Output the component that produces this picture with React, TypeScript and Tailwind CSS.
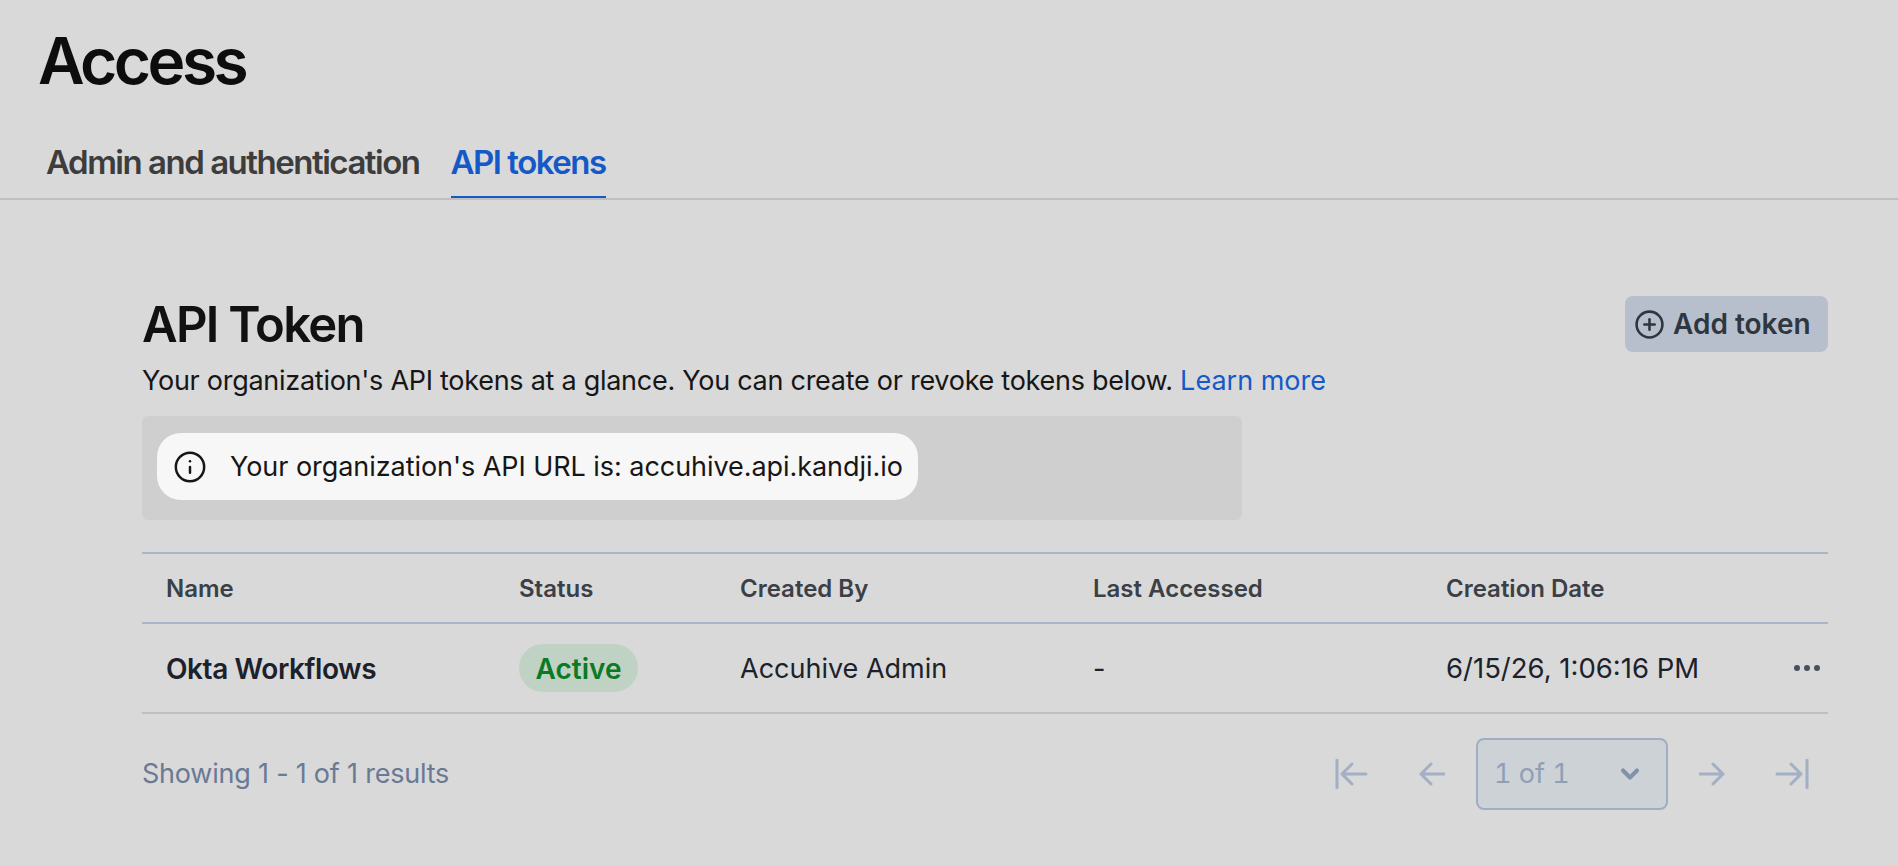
import React from 'react';
import { ChevronDown, CirclePlus, Info } from 'lucide-react';

const font = { fontFamily: 'Inter, "Liberation Sans", sans-serif' };

function PageArrow({ kind }: { kind: 'first' | 'prev' | 'next' | 'last' }) {
  const wide = kind === 'first' || kind === 'last';
  const paths: Record<string, string> = {
    first: 'M3 1v28M32 15H9M18 5L8 15l10 10',
    prev: 'M26 15H3M13 5L3 15l10 10',
    next: 'M1 15h23M14 5l10 10-10 10',
    last: 'M32 1v28M2 15h23M16 5l10 10-10 10',
  };
  return (
    <svg
      width={wide ? 34 : 27}
      height={30}
      viewBox={wide ? '0 0 34 30' : '0 0 27 30'}
      fill="none"
      stroke="#a3afc4"
      strokeWidth="3"
      strokeLinecap="round"
      strokeLinejoin="round"
    >
      <path d={paths[kind]} />
    </svg>
  );
}

export default function App() {
  return (
    <div className="h-[866px] w-[1898px] overflow-hidden bg-[#d9d9d9]" style={font}>
      {/* Page header */}
      <div className="h-[200px] border-b-2 border-[#bfbfbf]">
        <h1 className="pl-[38px] pt-[25px] text-[64px] leading-[72px] font-semibold tracking-[-0.055em] text-[#0d0d0d]">
          Access
        </h1>
        <div className="mt-[43px] flex pl-[46px] text-[33px] leading-[44px] font-semibold tracking-[-0.045em]">
          <div className="h-[58px] text-[#3d3d3d]">Admin and authentication</div>
          <div className="ml-[31px] h-[58px] border-b-2 border-[#1559c9] text-[#1559c9]">API tokens</div>
        </div>
      </div>

      <div className="ml-[142px] w-[1686px] pt-[96px]">
        <div className="relative">
          <div className="flex items-start justify-between">
            <h2 className="pt-[1px] text-[49px] leading-[56px] font-semibold tracking-[-0.035em] text-[#111111]">API Token</h2>
            <button className="flex h-[56px] w-[203px] items-center gap-[8px] rounded-[8px] bg-[#b7bfcc] pl-[9px] text-[28px] font-semibold text-[#2e3640]">
              <CirclePlus size={31} strokeWidth={2} />
              Add token
            </button>
          </div>
          <p className="mt-[8px] text-[27px] leading-[40px] tracking-[-0.01em] text-[#161616]">
            Your organization's API tokens at a glance. You can create or revoke tokens below.{' '}
            <span className="tracking-normal text-[#1559c9]">Learn more</span>
          </p>
        </div>

        <div className="mt-[15px] h-[104px] w-[1100px] rounded-[6px] bg-[#cfcfcf] pl-[15px] pt-[17px]">
          <div className="flex h-[67px] w-[761px] items-center rounded-[24px] bg-[#f7f7f7] pl-[16px] text-[27px] tracking-[-0.002em] text-[#161616]">
            <Info size={34} strokeWidth={1.75} />
            <span className="ml-[23px] pt-[2px]">Your organization's API URL is: accuhive.api.kandji.io</span>
          </div>
        </div>

        {/* Token table */}
        <div className="mt-[32px] border-t-2 border-[#a9b6c9]">
          <div className="grid h-[70px] grid-cols-[352px_221px_353px_353px_1fr] items-center border-b-2 border-[#a9b6c9] pt-[2px] text-[24px] font-semibold text-[#3b4046]">
            <div className="pl-[24px]">Name</div>
            <div className="pl-[25px]">Status</div>
            <div className="pl-[25px]">Created By</div>
            <div className="pl-[25px]">Last Accessed</div>
            <div className="pl-[25px]">Creation Date</div>
          </div>
          <div className="grid h-[90px] grid-cols-[352px_221px_353px_353px_1fr] items-center border-b-2 border-[#bfbfbf] text-[27px] text-[#1c222b]">
            <div className="pl-[24px] pt-[2px] text-[28px] font-semibold tracking-[-0.015em]">Okta Workflows</div>
            <div className="pl-[25px]">
              <span className="inline-flex h-[48px] w-[119px] items-center justify-center rounded-full bg-[#bfd2c4] pt-[2px] text-[28px] font-semibold text-[#0b7a24]">
                Active
              </span>
            </div>
            <div className="pl-[25px] pt-[2px]">Accuhive Admin</div>
            <div className="pl-[25px] pt-[2px]">-</div>
            <div className="flex items-center justify-between pl-[25px] pr-[8px]">
              <span className="pt-[2px] text-[27.5px]">6/15/26, 1:06:16 PM</span>
              <span className="flex gap-[4px]">
                <span className="size-[6px] rounded-full bg-[#47505e]" />
                <span className="size-[6px] rounded-full bg-[#47505e]" />
                <span className="size-[6px] rounded-full bg-[#47505e]" />
              </span>
            </div>
          </div>
        </div>

        {/* Pagination */}
        <div className="mt-[24px] flex h-[72px] items-center justify-between">
          <span className="text-[27px] tracking-[-0.008em] text-[#6b7a94]">Showing 1 - 1 of 1 results</span>
          <div className="flex items-center pr-[19px]">
            <PageArrow kind="first" />
            <div className="ml-[50px]"><PageArrow kind="prev" /></div>
            <div className="ml-[31px] flex h-[72px] w-[192px] items-center justify-between rounded-[8px] border-2 border-[#a0aec4] bg-[#cdd2d6] pl-[16px] pr-[22px] text-[27px] tabular-nums text-[#919fb5]">
              1 of 1
              <ChevronDown size={28} strokeWidth={3.5} className="text-[#8391a8]" />
            </div>
            <div className="ml-[31px]"><PageArrow kind="next" /></div>
            <div className="ml-[49px]"><PageArrow kind="last" /></div>
          </div>
        </div>
      </div>
    </div>
  );
}
